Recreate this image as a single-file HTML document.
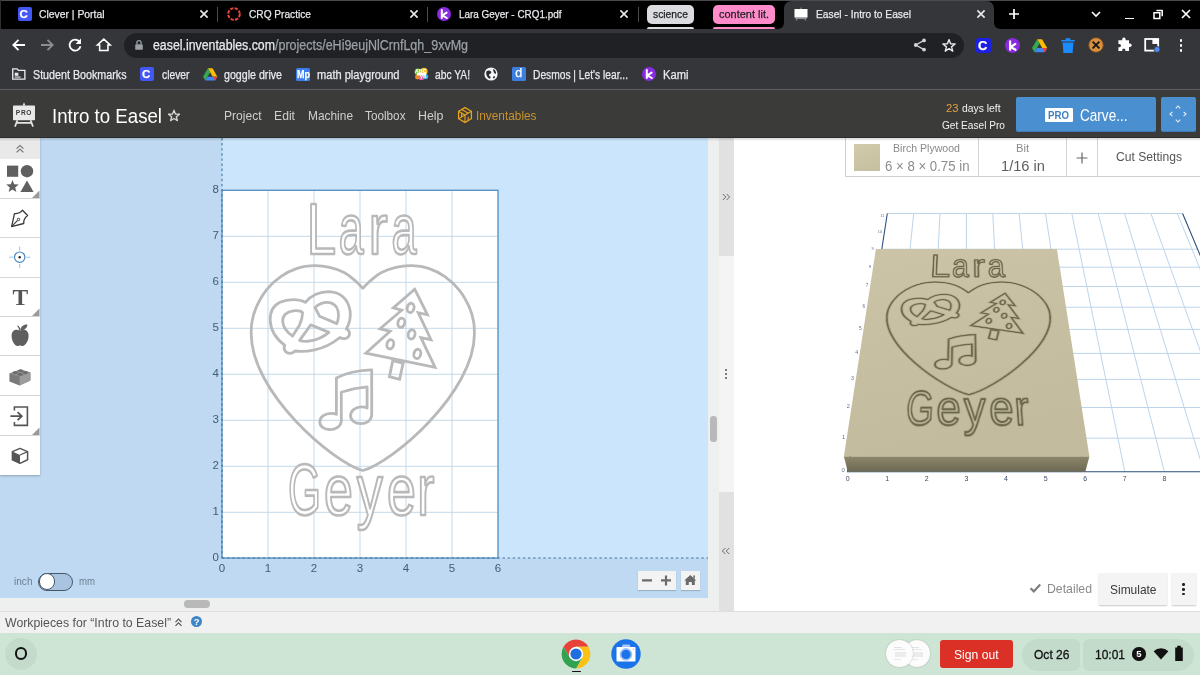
<!DOCTYPE html>
<html><head><meta charset="utf-8"><title>Easel - Intro to Easel</title>
<style>
*{box-sizing:border-box;margin:0;padding:0}
html,body{width:1200px;height:675px;overflow:hidden;background:#fff;font-family:"Liberation Sans",sans-serif;}
body{position:relative}
#root{position:absolute;left:0;top:0;width:1200px;height:675px;will-change:transform}
.abs{position:absolute}
.t{position:absolute;white-space:nowrap;display:block}
svg{position:absolute;overflow:visible}
</style></head><body>
<div id="root">
<div class="abs" style="left:0px;top:0px;width:1200px;height:29px;background:#000;"></div>
<div class="abs" style="left:0px;top:29px;width:1200px;height:62px;background:#35363a;"></div>
<div class="abs" style="left:0px;top:0px;width:1200px;height:1px;background:#4b4b4b;"></div>
<div class="abs" style="left:0px;top:0px;width:1px;height:29px;background:#2e2e2e;"></div>
<svg style="left:776px;top:0" width="228" height="29" viewBox="0 0 228 29"><path d="M0,29 C6,29 8,27 8,21 L8,9 C8,4 11,1 16,1 L210,1 C215,1 218,4 218,9 L218,21 C218,27 220,29 226,29 Z" fill="#35363a"/></svg>
<div class="abs" style="left:17.5px;top:7px;width:14px;height:14px;background:#4257f5;border-radius:2px"></div>
<span class="t" style="left:19.60px;top:6.50px;height:15px;line-height:15px;font-size:11.5px;color:#fff;font-weight:700;-webkit-text-stroke:0.25px;">C</span>
<span class="t" style="left:38.50px;top:6.00px;height:15px;line-height:15px;font-size:11.6px;color:#e8eaed;transform:scaleX(0.8938);transform-origin:0 50%;-webkit-text-stroke:0.25px;">Clever | Portal</span>
<svg style="left:197.5px;top:8.3px" width="12" height="12" viewBox="-6 -6 12 12"><path d="M-3.6,-3.6L3.6,3.6M3.6,-3.6L-3.6,3.6" stroke="#e8eaed" stroke-width="1.6" fill="none"/></svg>
<svg style="left:407.5px;top:8.3px" width="12" height="12" viewBox="-6 -6 12 12"><path d="M-3.6,-3.6L3.6,3.6M3.6,-3.6L-3.6,3.6" stroke="#e8eaed" stroke-width="1.6" fill="none"/></svg>
<svg style="left:617.5px;top:8.3px" width="12" height="12" viewBox="-6 -6 12 12"><path d="M-3.6,-3.6L3.6,3.6M3.6,-3.6L-3.6,3.6" stroke="#e8eaed" stroke-width="1.6" fill="none"/></svg>
<svg style="left:974.5px;top:8.3px" width="12" height="12" viewBox="-6 -6 12 12"><path d="M-3.6,-3.6L3.6,3.6M3.6,-3.6L-3.6,3.6" stroke="#e8eaed" stroke-width="1.6" fill="none"/></svg>
<div class="abs" style="left:217.0px;top:7px;width:1px;height:15px;background:#4a4b4e;"></div>
<div class="abs" style="left:426.5px;top:7px;width:1px;height:15px;background:#4a4b4e;"></div>
<div class="abs" style="left:637.5px;top:7px;width:1px;height:15px;background:#4a4b4e;"></div>
<svg style="left:226px;top:6px" width="16" height="16" viewBox="-8 -8 16 16"><circle r="5.8" fill="none" stroke="#e8453c" stroke-width="2" stroke-dasharray="3.3 1.25"/></svg>
<span class="t" style="left:248.50px;top:6.00px;height:15px;line-height:15px;font-size:11.6px;color:#e8eaed;transform:scaleX(0.8744);transform-origin:0 50%;-webkit-text-stroke:0.25px;">CRQ Practice</span>
<svg style="left:437px;top:7px" width="14" height="14" viewBox="-7 -7 14 14"><circle r="7" fill="#8a2be2"/><path d="M-2.2,-4 L-2.2,4 M2.6,-1.4 L-1.6,1.4 L2.8,4" stroke="#fff" stroke-width="2" fill="none" stroke-linecap="round" stroke-linejoin="round"/></svg>
<span class="t" style="left:458.50px;top:6.00px;height:15px;line-height:15px;font-size:11.6px;color:#e8eaed;transform:scaleX(0.8548);transform-origin:0 50%;-webkit-text-stroke:0.25px;">Lara Geyer - CRQ1.pdf</span>
<div class="abs" style="left:647px;top:4.5px;width:47px;height:19.5px;background:#dadce0;border-radius:5px"></div>
<span class="t" style="left:653.00px;top:6.00px;height:15px;line-height:15px;font-size:11.6px;color:#202124;transform:scaleX(0.8899);transform-origin:0 50%;-webkit-text-stroke:0.25px;">science</span>
<div class="abs" style="left:647px;top:27px;width:47px;height:2px;background:#dadce0;border-radius:2px 2px 0 0"></div>
<div class="abs" style="left:712.5px;top:4.5px;width:62.5px;height:19.5px;background:#ff8bcb;border-radius:5px"></div>
<span class="t" style="left:718.50px;top:6.00px;height:15px;line-height:15px;font-size:11.6px;color:#202124;transform:scaleX(0.9456);transform-origin:0 50%;-webkit-text-stroke:0.25px;">content lit.</span>
<div class="abs" style="left:712.5px;top:27px;width:62.5px;height:2px;background:#ff8bcb;border-radius:2px 2px 0 0"></div>
<svg style="left:793px;top:6px" width="16" height="16" viewBox="0 0 16 16"><rect x="1.5" y="3" width="13" height="8.6" fill="#fff"/><path d="M8,1.5V3M4.5,11.6L3.2,14.6M11.5,11.6L12.8,14.6M2.5,12.6H13.5" stroke="#9a9a9a" stroke-width="1" fill="none"/></svg>
<span class="t" style="left:815.50px;top:6.00px;height:15px;line-height:15px;font-size:11.6px;color:#e8eaed;transform:scaleX(0.8823);transform-origin:0 50%;-webkit-text-stroke:0.25px;">Easel - Intro to Easel</span>
<svg style="left:1006px;top:6px" width="16" height="16" viewBox="-8 -8 16 16"><path d="M-5,0H5M0,-5V5" stroke="#fff" stroke-width="1.7" fill="none"/></svg>
<svg style="left:1088px;top:6px" width="16" height="16" viewBox="-8 -8 16 16"><path d="M-4,-2L0,2L4,-2" stroke="#fff" stroke-width="1.6" fill="none"/></svg>
<div class="abs" style="left:1124.5px;top:17.5px;width:9.5px;height:1.8px;background:#fff;"></div>
<svg style="left:1150px;top:6px" width="16" height="16" viewBox="-8 -8 16 16"><path d="M-4,-1.2H1.8V4.6H-4Z" stroke="#fff" stroke-width="1.5" fill="none"/><path d="M-1.6,-3.6H4.2V2.2" stroke="#fff" stroke-width="1.5" fill="none"/></svg>
<svg style="left:1180px;top:8.3px" width="12" height="12" viewBox="-6 -6 12 12"><path d="M-4,-4L4,4M4,-4L-4,4" stroke="#fff" stroke-width="1.7" fill="none"/></svg>
<svg style="left:11px;top:37px" width="16" height="16" viewBox="-8 -8 16 16"><path d="M6,0H-5.5M-0.5,-5.2L-5.7,0L-0.5,5.2" stroke="#fff" stroke-width="1.8" fill="none"/></svg>
<svg style="left:39px;top:37px" width="16" height="16" viewBox="-8 -8 16 16"><path d="M-6,0H5.5M0.5,-5.2L5.7,0L0.5,5.2" stroke="#8a8d91" stroke-width="1.8" fill="none"/></svg>
<svg style="left:67px;top:37px" width="16" height="16" viewBox="-8 -8 16 16"><path d="M4.2,-3.6A5.5,5.5 0 1 0 5.5,1.2" stroke="#fff" stroke-width="1.8" fill="none"/><path d="M6,-6.4V-1H0.6Z" fill="#fff"/></svg>
<svg style="left:96px;top:37.2px" width="15.6" height="15.6" viewBox="-9 -9 18 18"><path d="M-7.4,0.2L0,-6.6L7.4,0.2H4.8V6.6H-4.8V0.2Z" stroke="#fff" stroke-width="1.8" fill="none" stroke-linejoin="miter"/></svg>
<div class="abs" style="left:124px;top:33px;width:840px;height:25px;background:#202124;border-radius:12.5px"></div>
<svg style="left:132.6px;top:38.6px" width="12" height="12" viewBox="0 0 14 14"><rect x="2.6" y="6" width="8.8" height="6.6" rx="1" fill="#9aa0a6"/><path d="M4.6,6V4.2A2.4,2.4 0 0 1 9.4,4.2V6" stroke="#9aa0a6" stroke-width="1.5" fill="none"/></svg>
<span class="t" style="left:152.50px;top:36.00px;height:18px;line-height:18px;font-size:14px;color:#e8eaed;transform:scaleX(0.8807);transform-origin:0 50%;-webkit-text-stroke:0.25px;">easel.inventables.com</span>
<span class="t" style="left:274.50px;top:36.00px;height:18px;line-height:18px;font-size:14px;color:#9aa0a6;transform:scaleX(0.8922);transform-origin:0 50%;-webkit-text-stroke:0.25px;">/projects/eHi9eujNlCrnfLqh_9xvMg</span>
<svg style="left:912px;top:37px" width="16" height="16" viewBox="-8 -8 16 16"><circle cx="4" cy="-4.6" r="1.9" fill="#d0d3d7"/><circle cx="-4.2" cy="0" r="1.9" fill="#d0d3d7"/><circle cx="4" cy="4.6" r="1.9" fill="#d0d3d7"/><path d="M4,-4.6L-4.2,0L4,4.6" stroke="#d0d3d7" stroke-width="1.3" fill="none"/></svg>
<svg style="left:938.5px;top:35.5px" width="20" height="20" viewBox="-10 -10 20 20"><path d="M0.00,-6.40 L1.58,-2.17 L6.09,-1.98 L2.56,0.83 L3.76,5.18 L0.00,2.69 L-3.76,5.18 L-2.56,0.83 L-6.09,-1.98 L-1.58,-2.17Z" stroke="#e8eaed" stroke-width="1.4" fill="none" stroke-linejoin="round"/></svg>
<div class="abs" style="left:976px;top:38px;width:15px;height:15px;background:#1c20e0;border-radius:2.5px"></div>
<span class="t" style="left:978.00px;top:37.10px;height:17px;line-height:17px;font-size:13px;color:#fff;font-weight:700;-webkit-text-stroke:0.25px;">C</span>
<svg style="left:1005.0px;top:38.0px" width="15.0" height="15.0" viewBox="-7 -7 14 14"><circle r="7" fill="#8a2be2"/><path d="M-2.2,-4 L-2.2,4 M2.6,-1.4 L-1.6,1.4 L2.8,4" stroke="#fff" stroke-width="2" fill="none" stroke-linecap="round" stroke-linejoin="round"/></svg>
<svg style="left:1032.4px;top:38.85px" width="15.2" height="13.299999999999999" viewBox="0 0 16 14"><path d="M5.4,0.3H10.6L16,9.6H10.8Z" fill="#fbbc04"/><path d="M5.4,0.3L0,9.6L2.6,14L8,4.8Z" fill="#34a853"/><path d="M2.6,14H13.4L16,9.6H5.2Z" fill="#4285f4"/><path d="M10.8,9.6H16L13.4,14L10.8,9.6Z" fill="#ea4335"/></svg>
<svg style="left:1060px;top:37px" width="16" height="17" viewBox="0 0 16 17"><path d="M1.2,3H14.8V4.6H1.2Z M5.6,1.2H10.4V3H5.6Z M2.6,5.6H13.4L12.6,16H3.4Z" fill="#1a8cff"/></svg>
<svg style="left:1088px;top:37px" width="16" height="16" viewBox="-8 -8 16 16"><circle r="7.2" fill="#d9903d"/><circle r="7.2" fill="none" stroke="#8a5520" stroke-width="0.8"/><path d="M-3.4,-3.4L3.4,3.4M3.4,-3.4L-3.4,3.4" stroke="#1a1a1a" stroke-width="2"/></svg>
<svg style="left:1116px;top:37px" width="16" height="16" viewBox="0 0 16 16"><path d="M6.2,2.2A1.7,1.7 0 0 1 9.6,2.2V3.2H13V6.6H14A1.7,1.7 0 0 1 14,10H13V14H9.4V13A1.6,1.6 0 0 0 6.2,13V14H2.4V10.2H3.4A1.6,1.6 0 0 0 3.4,7H2.4V3.2H6.2Z" fill="#fff"/></svg>
<svg style="left:1144px;top:37px" width="17" height="16" viewBox="0 0 17 16"><rect x="1.2" y="2" width="13" height="11.6" fill="none" stroke="#fff" stroke-width="1.8"/><rect x="8.4" y="2" width="5.8" height="5" fill="#fff"/><circle cx="13" cy="12.4" r="3" fill="#4d8bf5" stroke="#35363a" stroke-width="0.8"/></svg>
<div class="abs" style="left:1179.7px;top:39.2px;width:2.6px;height:2.6px;background:#fff;border-radius:50%"></div>
<div class="abs" style="left:1179.7px;top:44.2px;width:2.6px;height:2.6px;background:#fff;border-radius:50%"></div>
<div class="abs" style="left:1179.7px;top:49.2px;width:2.6px;height:2.6px;background:#fff;border-radius:50%"></div>
<svg style="left:12.4px;top:68.4px" width="13.6" height="11.8" viewBox="0 0 15 13"><path d="M0.8,1H5.6L7,2.6H14.2V12.2H0.8Z" fill="none" stroke="#e8eaed" stroke-width="1.5"/><rect x="3" y="5.2" width="4" height="3.4" fill="#e8eaed"/><rect x="3" y="9.4" width="6.5" height="1.2" fill="#e8eaed"/></svg>
<span class="t" style="left:33.00px;top:66.50px;height:16px;line-height:16px;font-size:12px;color:#e8eaed;transform:scaleX(0.8929);transform-origin:0 50%;-webkit-text-stroke:0.25px;">Student Bookmarks</span>
<div class="abs" style="left:140px;top:67px;width:14px;height:14px;background:#4257f5;border-radius:2px"></div>
<span class="t" style="left:142.10px;top:67.00px;height:15px;line-height:15px;font-size:11.5px;color:#fff;font-weight:700;-webkit-text-stroke:0.25px;">C</span>
<span class="t" style="left:161.50px;top:66.50px;height:16px;line-height:16px;font-size:12px;color:#e8eaed;transform:scaleX(0.8591);transform-origin:0 50%;-webkit-text-stroke:0.25px;">clever</span>
<svg style="left:202.8px;top:67.7px" width="14.4" height="12.6" viewBox="0 0 16 14"><path d="M5.4,0.3H10.6L16,9.6H10.8Z" fill="#fbbc04"/><path d="M5.4,0.3L0,9.6L2.6,14L8,4.8Z" fill="#34a853"/><path d="M2.6,14H13.4L16,9.6H5.2Z" fill="#4285f4"/><path d="M10.8,9.6H16L13.4,14L10.8,9.6Z" fill="#ea4335"/></svg>
<span class="t" style="left:224.00px;top:66.50px;height:16px;line-height:16px;font-size:12px;color:#e8eaed;transform:scaleX(0.8871);transform-origin:0 50%;-webkit-text-stroke:0.25px;">goggle drive</span>
<div class="abs" style="left:296px;top:67.5px;width:14px;height:13px;background:#3b7de9;border-radius:1.5px"></div>
<span class="t" style="left:296.60px;top:67.50px;height:13px;line-height:13px;font-size:10px;color:#fff;transform:scaleX(0.9004);transform-origin:0 50%;font-weight:700;-webkit-text-stroke:0.25px;">Mp</span>
<span class="t" style="left:317.00px;top:66.50px;height:16px;line-height:16px;font-size:12px;color:#e8eaed;transform:scaleX(0.9229);transform-origin:0 50%;-webkit-text-stroke:0.25px;">math playground</span>
<svg style="left:414px;top:67px" width="15" height="14" viewBox="0 0 15 14"><circle cx="4" cy="5" r="3.4" fill="#7ac943"/><circle cx="10" cy="4.4" r="3.6" fill="#f7c531"/><circle cx="7.4" cy="9.4" r="3.6" fill="#e05a9c"/><circle cx="11.6" cy="9.6" r="2.6" fill="#49b6e8"/><circle cx="3.4" cy="10" r="2.4" fill="#f08a2c"/><path d="M3,7.2H12" stroke="#fff" stroke-width="2.4"/></svg>
<span class="t" style="left:415.20px;top:69.40px;height:6px;line-height:6px;font-size:4.6px;color:#fff;transform:scaleX(1.1539);transform-origin:0 50%;font-weight:700;">ABC</span>
<span class="t" style="left:419.50px;top:74.20px;height:6px;line-height:6px;font-size:4.6px;color:#fff;transform:scaleX(1.1726);transform-origin:0 50%;font-weight:700;">ya</span>
<span class="t" style="left:435.00px;top:66.50px;height:16px;line-height:16px;font-size:12px;color:#e8eaed;transform:scaleX(0.8554);transform-origin:0 50%;-webkit-text-stroke:0.25px;">abc YA!</span>
<svg style="left:483.5px;top:67px" width="14" height="14" viewBox="-7 -7 14 14"><circle r="6.6" fill="#f5f6f7"/><path d="M-4.6,-2.4C-3,-4 -1.2,-3.4 0,-2.4C1,-1.6 0,-0.4 -1.2,0C-2.6,0.4 -2,2 -0.8,2.6C0,3 -0.4,4.6 -1.4,4.8C-3.8,3.8 -5.4,0.4 -4.6,-2.4Z M2.2,-5C4.2,-4.2 5.2,-2.4 5,-0.2C4,0 3,-0.8 2.7,-2C2.5,-3 1.8,-4 2.2,-5Z M2.6,2.2C3.6,2 4.4,2.6 4.1,3.3C3.5,4.1 2.9,4.5 2.3,4.5C1.9,3.8 1.9,2.7 2.6,2.2Z" fill="#2a2b2e"/></svg>
<div class="abs" style="left:512px;top:67px;width:14px;height:14px;background:#3d7fe0;border-radius:1.5px"></div>
<span class="t" style="left:515.20px;top:65.40px;height:16px;line-height:16px;font-size:12.5px;color:#fff;-webkit-text-stroke:0.25px;">d</span>
<span class="t" style="left:533.00px;top:66.50px;height:16px;line-height:16px;font-size:12px;color:#e8eaed;transform:scaleX(0.8524);transform-origin:0 50%;-webkit-text-stroke:0.25px;">Desmos | Let's lear...</span>
<svg style="left:642px;top:67px" width="14" height="14" viewBox="-7 -7 14 14"><circle r="7" fill="#8a2be2"/><path d="M-2.2,-4 L-2.2,4 M2.6,-1.4 L-1.6,1.4 L2.8,4" stroke="#fff" stroke-width="2" fill="none" stroke-linecap="round" stroke-linejoin="round"/></svg>
<span class="t" style="left:663.00px;top:66.50px;height:16px;line-height:16px;font-size:12px;color:#e8eaed;transform:scaleX(0.9327);transform-origin:0 50%;-webkit-text-stroke:0.25px;">Kami</span>
<div class="abs" style="left:0px;top:89px;width:1200px;height:1px;background:#5d5e61;"></div>
<div class="abs" style="left:0px;top:90px;width:1200px;height:48px;background:#3b3c39;"></div>
<div class="abs" style="left:0px;top:136.5px;width:1200px;height:1.5px;background:#2c2d2b;"></div>
<svg style="left:11px;top:100px" width="26" height="28" viewBox="0 0 26 28"><path d="M13,2.2L11.6,5.6H14.4Z" fill="#e6e6e6"/><rect x="2" y="5.6" width="22" height="14.6" rx="0.8" fill="#e9e9e9"/><path d="M6.4,20.2L4,26.6M19.6,20.2L22,26.6M4.6,22.8H21.4" stroke="#e6e6e6" stroke-width="1.7" fill="none"/><text x="13" y="15.4" text-anchor="middle" font-family="Liberation Sans,sans-serif" font-weight="700" font-size="6.6" letter-spacing="0.7" fill="#3b3c39">PRO</text></svg>
<span class="t" style="left:51.50px;top:102.20px;height:27px;line-height:27px;font-size:20.5px;color:#ffffff;transform:scaleX(0.9107);transform-origin:0 50%;">Intro to Easel</span>
<svg style="left:163.5px;top:105.5px" width="20" height="20" viewBox="-10 -10 20 20"><path d="M0.00,-5.80 L1.43,-1.97 L5.52,-1.79 L2.32,0.75 L3.41,4.69 L0.00,2.44 L-3.41,4.69 L-2.32,0.75 L-5.52,-1.79 L-1.43,-1.97Z" stroke="#d8d8d8" stroke-width="1.3" fill="none" stroke-linejoin="round"/></svg>
<span class="t" style="left:224.00px;top:107.00px;height:18px;line-height:18px;font-size:13.5px;color:#cfcfcf;transform:scaleX(0.8925);transform-origin:0 50%;">Project</span>
<span class="t" style="left:274.00px;top:107.00px;height:18px;line-height:18px;font-size:13.5px;color:#cfcfcf;transform:scaleX(0.9027);transform-origin:0 50%;">Edit</span>
<span class="t" style="left:307.50px;top:107.00px;height:18px;line-height:18px;font-size:13.5px;color:#cfcfcf;transform:scaleX(0.8819);transform-origin:0 50%;">Machine</span>
<span class="t" style="left:365.00px;top:107.00px;height:18px;line-height:18px;font-size:13.5px;color:#cfcfcf;transform:scaleX(0.8704);transform-origin:0 50%;">Toolbox</span>
<span class="t" style="left:418.00px;top:107.00px;height:18px;line-height:18px;font-size:13.5px;color:#cfcfcf;transform:scaleX(0.9184);transform-origin:0 50%;">Help</span>
<svg style="left:456.5px;top:107px" width="16" height="16" viewBox="-8 -8 16 16"><polygon points="0.00,-7.40 6.41,-3.70 6.41,3.70 0.00,7.40 -6.41,3.70 -6.41,-3.70" fill="none" stroke="#e9a21f" stroke-width="1.3"/><path d="M-6.4,-3.7L0,0L6.4,-3.7M0,0V7.4M-3.2,-5.5L3.2,-1.8M-3.4,1.9V-1.9M3.2,5.5V1.8M-6.4,3.7L0,0" stroke="#e9a21f" stroke-width="1.1" fill="none"/></svg>
<span class="t" style="left:476.00px;top:107.00px;height:18px;line-height:18px;font-size:13.5px;color:#c9922e;transform:scaleX(0.8762);transform-origin:0 50%;">Inventables</span>
<span class="t" style="left:946.00px;top:101.10px;height:15px;line-height:15px;font-size:11.5px;color:#e8a23a;transform:scaleX(0.9772);transform-origin:0 50%;">23</span>
<span class="t" style="left:961.50px;top:101.10px;height:15px;line-height:15px;font-size:11.5px;color:#f2f2f2;transform:scaleX(0.8990);transform-origin:0 50%;">days left</span>
<span class="t" style="left:941.50px;top:117.80px;height:15px;line-height:15px;font-size:11.5px;color:#f2f2f2;transform:scaleX(0.8800);transform-origin:0 50%;">Get Easel Pro</span>
<div class="abs" style="left:1015.5px;top:97px;width:140.5px;height:35px;background:#4a8fd0;border-radius:2px;border-bottom:1px solid #3d7ab6"></div>
<div class="abs" style="left:1044.5px;top:108px;width:28.5px;height:13.5px;background:#fff;border-radius:1px"></div>
<span class="t" style="left:1048.30px;top:107.90px;height:14px;line-height:14px;font-size:10.5px;color:#3f7fbf;transform:scaleX(0.9229);transform-origin:0 50%;font-weight:700;">PRO</span>
<span class="t" style="left:1080.00px;top:105.10px;height:21px;line-height:21px;font-size:16px;color:#fff;transform:scaleX(0.8480);transform-origin:0 50%;">Carve...</span>
<div class="abs" style="left:1160.5px;top:97px;width:35.5px;height:35px;background:#4a8fd0;border-radius:2px;border-bottom:1px solid #3d7ab6"></div>
<svg style="left:1167px;top:103px" width="22" height="22" viewBox="-11 -11 22 22"><path d="M-2.2,-5.6L0,-8L2.2,-5.6M-2.2,5.6L0,8L2.2,5.6M-5.6,-2.2L-8,0L-5.6,2.2M5.6,-2.2L8,0L5.6,2.2" stroke="#e8f0fa" stroke-width="1.1" fill="none"/></svg>
<div class="abs" style="left:0px;top:138px;width:708px;height:460px;background:#bed9f1;"></div>
<div class="abs" style="left:222px;top:138px;width:486px;height:420px;background:#cae5fc;"></div>
<div class="abs" style="left:0px;top:138px;width:1200px;height:3px;background:transparent;background:linear-gradient(rgba(0,0,0,.16),rgba(0,0,0,0));z-index:5"></div>
<svg style="left:0;top:0" width="1200" height="675" viewBox="0 0 1200 675">
<rect x="222.0" y="190.3" width="276.0" height="367.7" fill="#fff"/>
<path d="M268.0,190.3V558.0" stroke="#c4d9eb" stroke-width="1"/>
<path d="M314.0,190.3V558.0" stroke="#c4d9eb" stroke-width="1"/>
<path d="M360.0,190.3V558.0" stroke="#c4d9eb" stroke-width="1"/>
<path d="M406.0,190.3V558.0" stroke="#c4d9eb" stroke-width="1"/>
<path d="M452.0,190.3V558.0" stroke="#c4d9eb" stroke-width="1"/>
<path d="M222.0,512.3H498.0" stroke="#c4d9eb" stroke-width="1"/>
<path d="M222.0,466.3H498.0" stroke="#c4d9eb" stroke-width="1"/>
<path d="M222.0,420.3H498.0" stroke="#c4d9eb" stroke-width="1"/>
<path d="M222.0,374.3H498.0" stroke="#c4d9eb" stroke-width="1"/>
<path d="M222.0,328.3H498.0" stroke="#c4d9eb" stroke-width="1"/>
<path d="M222.0,282.3H498.0" stroke="#c4d9eb" stroke-width="1"/>
<path d="M222.0,236.3H498.0" stroke="#c4d9eb" stroke-width="1"/>
<path d="M362.8,288.2 C364.2,286.8 368.3,282.5 371.4,279.9 C374.5,277.3 377.4,274.7 381.5,272.6 C385.6,270.5 390.8,268.5 395.9,267.4 C401.0,266.2 406.8,265.5 412.2,265.7 C417.7,265.9 423.1,266.6 428.6,268.4 C434.0,270.2 439.8,273.1 444.9,276.7 C450.1,280.3 455.2,285.0 459.3,290.2 C463.4,295.4 467.1,302.4 469.5,307.7 C471.9,313.0 472.9,317.9 473.7,322.3 C474.5,326.6 474.3,330.0 474.4,334.0 C474.4,392.3 393.1,462.0 362.8,470.5 C332.5,462.0 251.2,392.3 251.2,334.0 C251.3,330.0 251.1,326.6 251.9,322.3 C252.7,317.9 253.7,313.0 256.1,307.7 C258.5,302.4 262.2,295.4 266.3,290.2 C270.4,285.0 275.5,280.3 280.7,276.7 C285.8,273.1 291.6,270.2 297.0,268.4 C302.5,266.6 307.9,265.9 313.4,265.7 C318.8,265.5 324.6,266.2 329.7,267.4 C334.8,268.5 340.0,270.5 344.1,272.6 C348.2,274.7 351.1,277.3 354.2,279.9 C357.3,282.5 361.4,286.8 362.8,288.2 Z" fill="none" stroke="#b9b9b9" stroke-width="2.8" stroke-linejoin="round"/>
<path d="M270.2,320.4 C269.9,311.6 273.8,305.3 280.0,302.3 C288.0,298.8 298.7,298.8 305.4,302.3 C311.1,295.6 320.0,291.6 328.9,291.6 C339.6,292.0 348.4,298.2 350.2,311.6 C350.9,318.7 349.3,324.0 346.3,329.0 C350.6,330.8 350.6,336.4 346.3,338.2 C344.0,339.1 341.7,338.6 339.9,337.5 C332.4,343.6 323.6,348.0 314.7,349.8 C307.6,351.4 300.4,351.7 294.8,351.0 C292.6,354.2 287.3,354.2 285.2,351.0 C283.7,348.9 283.7,347.1 284.8,345.3 C276.4,339.1 270.6,330.2 270.2,320.4 Z" fill="none" stroke="#b9b9b9" stroke-width="2.8" stroke-linejoin="round"/>
<path d="M282.7,321.3 C282.3,316.0 286.6,311.6 293.3,310.8 C297.8,310.3 301.3,311.2 302.6,312.6 C302.6,316.9 301.3,321.3 299.6,324.9 L292.6,336.1 C286.6,332.0 283.0,327.2 282.7,321.3 Z" fill="none" stroke="#b9b9b9" stroke-width="2.8" stroke-linejoin="round"/>
<path d="M315.0,307.6 C318.2,303.6 324.4,301.8 329.8,302.7 C336.0,304.1 338.8,309.8 338.5,316.0 C338.3,319.0 337.8,321.3 336.9,323.6 L319.5,316.2 C317.9,313.3 317.3,311.6 315.0,307.6 Z" fill="none" stroke="#b9b9b9" stroke-width="2.8" stroke-linejoin="round"/>
<path d="M310.8,324.9 L328.9,332.4 C323.6,336.8 316.4,340.0 310.2,340.9 C305.8,341.8 302.2,341.4 299.6,340.4 Z" fill="none" stroke="#b9b9b9" stroke-width="2.8" stroke-linejoin="round"/>
<path d="M414.7,289.2 L427.5,314.8 L418.2,312.7 L431.0,339.7 L420.9,337.6 L435.1,367.4 L365.8,353.2 L390.1,331.3 L380.0,328.7 L401.7,310.2 L393.3,307.9Z" fill="none" stroke="#b9b9b9" stroke-width="2.8" stroke-linejoin="miter"/>
<path d="M392.8,360.7 L403.1,363.2 L399.6,379.3 L389.4,376.7Z" fill="none" stroke="#b9b9b9" stroke-width="2.8"/>
<ellipse cx="410.6" cy="307.9" rx="3.4" ry="4.7" transform="rotate(14 410.6 307.9)" fill="none" stroke="#b9b9b9" stroke-width="2.8"/>
<ellipse cx="401.3" cy="322.8" rx="3.4" ry="4.7" transform="rotate(14 401.3 322.8)" fill="none" stroke="#b9b9b9" stroke-width="2.8"/>
<ellipse cx="411.6" cy="334.4" rx="3.4" ry="4.7" transform="rotate(14 411.6 334.4)" fill="none" stroke="#b9b9b9" stroke-width="2.8"/>
<ellipse cx="390.3" cy="344.3" rx="3.4" ry="4.7" transform="rotate(14 390.3 344.3)" fill="none" stroke="#b9b9b9" stroke-width="2.8"/>
<ellipse cx="417.3" cy="353.9" rx="3.4" ry="4.7" transform="rotate(14 417.3 353.9)" fill="none" stroke="#b9b9b9" stroke-width="2.8"/>
<path d="M336.4,377.9 C345.8,373.1 358.2,370.4 371.7,369.9 L371.7,415.4 C371.0,420.8 366.2,423.6 360.9,423.6 C354.7,423.6 350.6,420.2 350.6,415.8 C350.6,410.4 355.6,406.9 361.8,406.9 C363.9,406.9 365.7,407.2 367.1,408.0 L367.1,386.8 C358.2,387.7 349.3,389.5 341.3,392.3 L341.3,421.5 C340.4,426.8 335.5,429.6 329.8,429.6 C323.9,429.6 319.8,426.4 319.8,422.0 C319.8,416.7 325.2,413.3 331.2,413.3 C333.3,413.3 335.1,413.6 336.4,414.4 Z" fill="none" stroke="#b9b9b9" stroke-width="2.8" stroke-linejoin="round"/>
<text y="254.3" font-family="Liberation Sans,sans-serif" font-size="72" fill="#fff" stroke="#b9b9b9" stroke-width="2.6" stroke-linejoin="round"><tspan x="306.72" textLength="29.33" lengthAdjust="spacingAndGlyphs">L</tspan><tspan x="338.8" textLength="24.9" lengthAdjust="spacingAndGlyphs">a</tspan><tspan x="368.48" textLength="19.18" lengthAdjust="spacingAndGlyphs">r</tspan><tspan x="391.39" textLength="25.06" lengthAdjust="spacingAndGlyphs">a</tspan></text>
<text y="515" font-family="Liberation Sans,sans-serif" font-size="72" fill="#fff" stroke="#b9b9b9" stroke-width="2.6" stroke-linejoin="round"><tspan x="287.92" textLength="32.94" lengthAdjust="spacingAndGlyphs">G</tspan><tspan x="324.09" textLength="28.92" lengthAdjust="spacingAndGlyphs">e</tspan><tspan x="356.67" textLength="26.13" lengthAdjust="spacingAndGlyphs">y</tspan><tspan x="387.09" textLength="28.92" lengthAdjust="spacingAndGlyphs">e</tspan><tspan x="417.37" textLength="17.18" lengthAdjust="spacingAndGlyphs">r</tspan></text>
<rect x="222.0" y="190.3" width="276.0" height="367.7" fill="none" stroke="#5b94c4" stroke-width="1.4"/>
<path d="M222.0,138V558.0" stroke="#3f74a3" stroke-width="1.1" stroke-dasharray="2.4 2.7" fill="none"/>
<path d="M222.0,558.0H708" stroke="#3f74a3" stroke-width="1.1" stroke-dasharray="2.4 2.7" fill="none"/>
</svg>
<span class="t" style="left:212.50px;top:549.90px;height:15px;line-height:15px;font-size:11.5px;color:#3f5d78;">0</span>
<span class="t" style="left:212.50px;top:503.90px;height:15px;line-height:15px;font-size:11.5px;color:#3f5d78;">1</span>
<span class="t" style="left:212.50px;top:457.90px;height:15px;line-height:15px;font-size:11.5px;color:#3f5d78;">2</span>
<span class="t" style="left:212.50px;top:411.90px;height:15px;line-height:15px;font-size:11.5px;color:#3f5d78;">3</span>
<span class="t" style="left:212.50px;top:365.90px;height:15px;line-height:15px;font-size:11.5px;color:#3f5d78;">4</span>
<span class="t" style="left:212.50px;top:319.90px;height:15px;line-height:15px;font-size:11.5px;color:#3f5d78;">5</span>
<span class="t" style="left:212.50px;top:273.90px;height:15px;line-height:15px;font-size:11.5px;color:#3f5d78;">6</span>
<span class="t" style="left:212.50px;top:227.90px;height:15px;line-height:15px;font-size:11.5px;color:#3f5d78;">7</span>
<span class="t" style="left:212.50px;top:181.90px;height:15px;line-height:15px;font-size:11.5px;color:#3f5d78;">8</span>
<span class="t" style="left:218.80px;top:561.00px;height:15px;line-height:15px;font-size:11.5px;color:#3f5d78;">0</span>
<span class="t" style="left:264.80px;top:561.00px;height:15px;line-height:15px;font-size:11.5px;color:#3f5d78;">1</span>
<span class="t" style="left:310.80px;top:561.00px;height:15px;line-height:15px;font-size:11.5px;color:#3f5d78;">2</span>
<span class="t" style="left:356.80px;top:561.00px;height:15px;line-height:15px;font-size:11.5px;color:#3f5d78;">3</span>
<span class="t" style="left:402.80px;top:561.00px;height:15px;line-height:15px;font-size:11.5px;color:#3f5d78;">4</span>
<span class="t" style="left:448.80px;top:561.00px;height:15px;line-height:15px;font-size:11.5px;color:#3f5d78;">5</span>
<span class="t" style="left:494.80px;top:561.00px;height:15px;line-height:15px;font-size:11.5px;color:#3f5d78;">6</span>
<div class="abs" style="left:0px;top:138px;width:39.5px;height:336.5px;background:#fff;box-shadow:0 1px 2px rgba(0,0,0,.25)"></div>
<div class="abs" style="left:0px;top:138px;width:39.5px;height:21px;background:#e9e9e9;"></div>
<svg style="left:13px;top:142px" width="14" height="14" viewBox="-7 -7 14 14"><path d="M-3.4,-0.4L0,-3.6L3.4,-0.4M-3.4,3.4L0,0.2L3.4,3.4" stroke="#6a6a6a" stroke-width="1.1" fill="none"/></svg>
<div class="abs" style="left:0px;top:198.0px;width:39.5px;height:1px;background:#d6d6d6;"></div>
<div class="abs" style="left:0px;top:236.8px;width:39.5px;height:1px;background:#d6d6d6;"></div>
<div class="abs" style="left:0px;top:276.5px;width:39.5px;height:1px;background:#d6d6d6;"></div>
<div class="abs" style="left:0px;top:315.8px;width:39.5px;height:1px;background:#d6d6d6;"></div>
<div class="abs" style="left:0px;top:355.3px;width:39.5px;height:1px;background:#d6d6d6;"></div>
<div class="abs" style="left:0px;top:395.1px;width:39.5px;height:1px;background:#d6d6d6;"></div>
<div class="abs" style="left:0px;top:435.1px;width:39.5px;height:1px;background:#d6d6d6;"></div>
<svg style="left:0;top:0" width="40" height="480" viewBox="0 0 40 480"><rect x="7" y="165.6" width="11.2" height="11.2" fill="#5f5f5f"/><circle cx="27" cy="171.2" r="6.2" fill="#5f5f5f"/><polygon points="12.50,180.00 14.15,184.33 18.78,184.56 15.16,187.47 16.38,191.94 12.50,189.40 8.62,191.94 9.84,187.47 6.22,184.56 10.85,184.33" fill="#5f5f5f"/><polygon points="27,180.4 33.6,192 20.4,192" fill="#5f5f5f"/><polygon points="39.5,190.5 39.5,198 32,198" fill="#9a9a9a"/><polygon points="39.5,308.5 39.5,316 32,316" fill="#9a9a9a"/><polygon points="39.5,427.5 39.5,435 32,435" fill="#9a9a9a"/><path d="M11.6,226.7 L14.5,213.7 Q19.5,214 22.5,210.2 L27.6,215.5 Q23.4,218.6 23.7,223.5 Z" fill="none" stroke="#3a3a3a" stroke-width="1.3" stroke-linejoin="round"/><path d="M11.6,226.7L17.6,220.4" stroke="#3a3a3a" stroke-width="1.1"/><circle cx="18.55" cy="219.45" r="1.2" fill="#fff" stroke="#3a3a3a" stroke-width="1"/><circle cx="19.7" cy="257.2" r="5.2" fill="none" stroke="#4a86c8" stroke-width="1.2"/><circle cx="19.7" cy="257.2" r="1.2" fill="#222"/><path d="M19.7,246.5V250.5M19.7,264V268M9,257.2H13M26.4,257.2H30.4" stroke="#9cc0e6" stroke-width="1"/><path d="M20,331 C17,328.6 11.6,329.6 11.6,335.8 C11.6,341 14.6,346 17.4,346 C18.6,346 19.2,345.4 20,345.4 C20.8,345.4 21.4,346 22.6,346 C25.4,346 28.6,341 28.6,335.8 C28.6,329.6 23,328.6 20,331Z" fill="#5f5f5f"/><path d="M20.4,330.4 C20.4,326.6 23.4,324.2 27.4,324.4 C27.2,328 24.4,330.4 20.4,330.4Z" fill="#5f5f5f"/><path d="M20,331C19.8,328.6 19,327 17.6,325.8" stroke="#5f5f5f" stroke-width="1.2" fill="none"/><path d="M9.4,373.4L20.4,369.6L30.4,372.4V380.4L19.6,385.4L9.4,381.4Z" fill="#7a7a7a"/><path d="M9.4,373.4L19.6,376.8L30.4,372.4L20.4,369.6Z" fill="#8e8e8e"/><path d="M19.6,376.8V385.4L30.4,380.4V372.4Z" fill="#9c9c9c"/><ellipse cx="15.4" cy="372.6" rx="2.6" ry="1.3" fill="#6a6a6a"/><ellipse cx="20.6" cy="370.8" rx="2.6" ry="1.3" fill="#6a6a6a"/><ellipse cx="20" cy="374.4" rx="2.6" ry="1.3" fill="#6a6a6a"/><ellipse cx="25.2" cy="372.6" rx="2.6" ry="1.3" fill="#6a6a6a"/><path d="M14.4,410.4V407H27.4V425.4H14.4V422" fill="none" stroke="#555" stroke-width="1.6"/><path d="M10.4,416.2H21M17.6,412.2L21.8,416.2L17.6,420.2" fill="none" stroke="#555" stroke-width="1.8"/><path d="M20,448.4L27.6,451.6V459.8L20,463.4L12.4,459.8V451.6Z" fill="#fff" stroke="#555" stroke-width="1.5" stroke-linejoin="round"/><path d="M12.4,451.6L20,455V463.4L12.4,459.8Z" fill="#555"/><path d="M20,455L27.6,451.6" stroke="#555" stroke-width="1.3"/></svg>
<span class="t" style="left:12.60px;top:281.70px;height:31px;line-height:31px;font-size:23.5px;color:#555;font-weight:700;font-family:'Liberation Serif',serif;">T</span>
<span class="t" style="left:13.50px;top:573.80px;height:14px;line-height:14px;font-size:11px;color:#6f8092;transform:scaleX(0.9168);transform-origin:0 50%;">inch</span>
<div class="abs" style="left:38px;top:573px;width:35px;height:17.5px;background:#a9c4e0;border-radius:9px;border:1.2px solid #46576a"></div>
<div class="abs" style="left:38.6px;top:573.4px;width:16.6px;height:16.6px;background:#fff;border-radius:50%;border:1.2px solid #46576a"></div>
<span class="t" style="left:79.00px;top:573.80px;height:14px;line-height:14px;font-size:11px;color:#6f8092;transform:scaleX(0.8731);transform-origin:0 50%;">mm</span>
<div class="abs" style="left:638px;top:571px;width:38.3px;height:19.4px;background:#f3f3f3;box-shadow:0 1px 1px rgba(0,0,0,.18)"></div>
<div class="abs" style="left:680.7px;top:571px;width:19.3px;height:19.4px;background:#f3f3f3;box-shadow:0 1px 1px rgba(0,0,0,.18)"></div>
<svg style="left:638px;top:571px" width="62" height="20" viewBox="638 571 62 20"><path d="M642,580.4H652M661,580.4H671M666,575.4V585.4" stroke="#6b6b6b" stroke-width="2.2"/><path d="M690.3,575L696.4,580.6H694.8V585H691.8V582H688.8V585H685.8V580.6H684.2Z" fill="#6b6b6b"/><rect x="693.4" y="575.4" width="1.5" height="3" fill="#6b6b6b"/></svg>
<div class="abs" style="left:708px;top:138px;width:11px;height:473px;background:#eeefef;"></div>
<div class="abs" style="left:710.2px;top:416px;width:6.6px;height:26px;background:#b9b9b9;border-radius:3.3px"></div>
<div class="abs" style="left:0px;top:597.7px;width:708px;height:13.3px;background:#eeefef;"></div>
<div class="abs" style="left:184px;top:600.3px;width:26px;height:7.4px;background:#b9b9b9;border-radius:3.7px"></div>
<div class="abs" style="left:719px;top:138px;width:14.5px;height:473px;background:#f4f4f4;"></div>
<div class="abs" style="left:719px;top:138px;width:14.5px;height:118px;background:#e1e1e1;"></div>
<div class="abs" style="left:719px;top:492px;width:14.5px;height:119px;background:#e1e1e1;"></div>
<svg style="left:719px;top:190px" width="14" height="14" viewBox="-7 -7 14 14"><path d="M-3.2,-3L-0.2,0L-3.2,3M0.6,-3L3.6,0L0.6,3" stroke="#6a6a6a" stroke-width="1" fill="none"/></svg>
<svg style="left:719px;top:544px" width="14" height="14" viewBox="-7 -7 14 14"><path d="M3.2,-3L0.2,0L3.2,3M-0.6,-3L-3.6,0L-0.6,3" stroke="#6a6a6a" stroke-width="1" fill="none"/></svg>
<div class="abs" style="left:725px;top:369px;width:2.2px;height:2.2px;background:#555;border-radius:50%"></div>
<div class="abs" style="left:725px;top:373px;width:2.2px;height:2.2px;background:#555;border-radius:50%"></div>
<div class="abs" style="left:725px;top:377px;width:2.2px;height:2.2px;background:#555;border-radius:50%"></div>
<div class="abs" style="left:0px;top:611px;width:1200px;height:22px;background:#f1f1f1;border-top:1px solid #dedede"></div>
<span class="t" style="left:4.50px;top:613.50px;height:17px;line-height:17px;font-size:13px;color:#555;transform:scaleX(0.9468);transform-origin:0 50%;">Workpieces for “Intro to Easel”</span>
<svg style="left:172px;top:615.5px" width="13" height="13" viewBox="-6.5 -6.5 13 13"><path d="M-3,-0.4L0,-3.4L3,-0.4M-3,3.4L0,0.4L3,3.4" stroke="#555" stroke-width="1.2" fill="none"/></svg>
<div class="abs" style="left:190.8px;top:616.4px;width:11px;height:11px;background:#3d85c6;border-radius:50%"></div>
<span class="t" style="left:193.80px;top:616.00px;height:12px;line-height:12px;font-size:9.5px;color:#fff;font-weight:700;">?</span>
<div class="abs" style="left:733.5px;top:138px;width:466.5px;height:473px;background:#fff;"></div>
<svg style="left:0;top:0" width="1200" height="675" viewBox="0 0 1200 675">
<defs><clipPath id="pc"><rect x="734" y="138" width="466" height="473"/></clipPath><linearGradient id="wtop" x1="0" y1="0" x2="0.25" y2="1"><stop offset="0" stop-color="#cbc4a7"/><stop offset="0.5" stop-color="#c6bfa1"/><stop offset="1" stop-color="#c2bb9d"/></linearGradient><linearGradient id="wfront" x1="0" y1="0" x2="0" y2="1"><stop offset="0" stop-color="#8d876b"/><stop offset="1" stop-color="#6c6853"/></linearGradient></defs>
<g clip-path="url(#pc)">
<path d="M887.2,471.7L913.7,213.5" stroke="#bdd4ea" stroke-width="1"/>
<path d="M926.8,471.7L940.0,213.5" stroke="#bdd4ea" stroke-width="1"/>
<path d="M966.4,471.7L966.4,213.5" stroke="#bdd4ea" stroke-width="1"/>
<path d="M1006.0,471.7L992.8,213.5" stroke="#bdd4ea" stroke-width="1"/>
<path d="M1045.6,471.7L1019.1,213.5" stroke="#bdd4ea" stroke-width="1"/>
<path d="M1085.2,471.7L1045.5,213.5" stroke="#bdd4ea" stroke-width="1"/>
<path d="M1124.8,471.7L1071.8,213.5" stroke="#bdd4ea" stroke-width="1"/>
<path d="M1164.4,471.7L1098.2,213.5" stroke="#bdd4ea" stroke-width="1"/>
<path d="M1204.0,471.7L1124.6,213.5" stroke="#bdd4ea" stroke-width="1"/>
<path d="M1243.6,471.7L1150.9,213.5" stroke="#bdd4ea" stroke-width="1"/>
<path d="M1283.2,471.7L1177.3,213.5" stroke="#bdd4ea" stroke-width="1"/>
<path d="M852.7,438.2L1277.2,438.2" stroke="#bdd4ea" stroke-width="1"/>
<path d="M857.4,407.5L1264.4,407.5" stroke="#bdd4ea" stroke-width="1"/>
<path d="M861.7,379.4L1252.6,379.4" stroke="#bdd4ea" stroke-width="1"/>
<path d="M865.7,353.4L1241.7,353.4" stroke="#bdd4ea" stroke-width="1"/>
<path d="M869.4,329.4L1231.6,329.4" stroke="#bdd4ea" stroke-width="1"/>
<path d="M872.8,307.2L1222.3,307.2" stroke="#bdd4ea" stroke-width="1"/>
<path d="M876.0,286.5L1213.5,286.5" stroke="#bdd4ea" stroke-width="1"/>
<path d="M879.0,267.2L1205.4,267.2" stroke="#bdd4ea" stroke-width="1"/>
<path d="M881.8,249.2L1197.8,249.2" stroke="#bdd4ea" stroke-width="1"/>
<path d="M887.3,213.5L1182.6,213.5" stroke="#bdd4ea" stroke-width="1"/>
<path d="M887.3,213.5L847.6,471.7L1291.1,471.7L1182.6,213.5" stroke="#2c4f7c" stroke-width="1.1" fill="none"/>
<polygon points="875.9,248.9 1056.9,248.9 1089.4,456.4 843.9,456.4" fill="url(#wtop)"/>
<polygon points="843.9,456.4 1089.4,456.4 1085.3,471.8 847.8,471.8" fill="url(#wfront)"/>
</g>
<text x="847.6" y="481" text-anchor="middle" font-family="Liberation Sans,sans-serif" font-size="7" fill="#3a4a66">0</text>
<text x="887.2" y="481" text-anchor="middle" font-family="Liberation Sans,sans-serif" font-size="7" fill="#3a4a66">1</text>
<text x="926.8" y="481" text-anchor="middle" font-family="Liberation Sans,sans-serif" font-size="7" fill="#3a4a66">2</text>
<text x="966.4" y="481" text-anchor="middle" font-family="Liberation Sans,sans-serif" font-size="7" fill="#3a4a66">3</text>
<text x="1006.0" y="481" text-anchor="middle" font-family="Liberation Sans,sans-serif" font-size="7" fill="#3a4a66">4</text>
<text x="1045.6" y="481" text-anchor="middle" font-family="Liberation Sans,sans-serif" font-size="7" fill="#3a4a66">5</text>
<text x="1085.2" y="481" text-anchor="middle" font-family="Liberation Sans,sans-serif" font-size="7" fill="#3a4a66">6</text>
<text x="1124.8" y="481" text-anchor="middle" font-family="Liberation Sans,sans-serif" font-size="7" fill="#3a4a66">7</text>
<text x="1164.4" y="481" text-anchor="middle" font-family="Liberation Sans,sans-serif" font-size="7" fill="#3a4a66">8</text>
<text x="843.1" y="472.2" text-anchor="middle" font-family="Liberation Sans,sans-serif" font-size="6.0" fill="#3a4a66" opacity="0.8">0</text>
<text x="843.5" y="438.7" text-anchor="middle" font-family="Liberation Sans,sans-serif" font-size="5.8" fill="#3a4a66" opacity="0.8">1</text>
<text x="848.2" y="408.0" text-anchor="middle" font-family="Liberation Sans,sans-serif" font-size="5.6" fill="#3a4a66" opacity="0.8">2</text>
<text x="852.6" y="379.9" text-anchor="middle" font-family="Liberation Sans,sans-serif" font-size="5.3" fill="#3a4a66" opacity="0.8">3</text>
<text x="856.6" y="353.9" text-anchor="middle" font-family="Liberation Sans,sans-serif" font-size="5.1" fill="#3a4a66" opacity="0.8">4</text>
<text x="860.3" y="329.9" text-anchor="middle" font-family="Liberation Sans,sans-serif" font-size="4.9" fill="#3a4a66" opacity="0.8">5</text>
<text x="863.7" y="307.7" text-anchor="middle" font-family="Liberation Sans,sans-serif" font-size="4.7" fill="#3a4a66" opacity="0.8">6</text>
<text x="866.9" y="287.0" text-anchor="middle" font-family="Liberation Sans,sans-serif" font-size="4.5" fill="#3a4a66" opacity="0.8">7</text>
<text x="869.9" y="267.7" text-anchor="middle" font-family="Liberation Sans,sans-serif" font-size="4.2" fill="#3a4a66" opacity="0.8">8</text>
<text x="872.7" y="249.7" text-anchor="middle" font-family="Liberation Sans,sans-serif" font-size="4.0" fill="#3a4a66" opacity="0.8">9</text>
<text x="879.9" y="232.8" text-anchor="middle" font-family="Liberation Sans,sans-serif" font-size="3.8" fill="#3a4a66" opacity="0.8">10</text>
<text x="882.3" y="217.0" text-anchor="middle" font-family="Liberation Sans,sans-serif" font-size="3.6" fill="#3a4a66" opacity="0.8">11</text>
</svg>
<div class="abs" style="left:0;top:0;width:276.0px;height:367.7px;transform-origin:0 0;transform:matrix3d(0.65579710,0.00000000,0,0.0000000000,-0.69001117,0.23821166,0,-0.0007145203,0,0,1,0,875.900000,248.900000,0,1);"><svg style="left:0;top:0" width="276.0" height="367.7" viewBox="222.0 190.3 276.0 367.7"><path d="M362.8,288.2 C364.2,286.8 368.3,282.5 371.4,279.9 C374.5,277.3 377.4,274.7 381.5,272.6 C385.6,270.5 390.8,268.5 395.9,267.4 C401.0,266.2 406.8,265.5 412.2,265.7 C417.7,265.9 423.1,266.6 428.6,268.4 C434.0,270.2 439.8,273.1 444.9,276.7 C450.1,280.3 455.2,285.0 459.3,290.2 C463.4,295.4 467.1,302.4 469.5,307.7 C471.9,313.0 472.9,317.9 473.7,322.3 C474.5,326.6 474.3,330.0 474.4,334.0 C474.4,392.3 393.1,462.0 362.8,470.5 C332.5,462.0 251.2,392.3 251.2,334.0 C251.3,330.0 251.1,326.6 251.9,322.3 C252.7,317.9 253.7,313.0 256.1,307.7 C258.5,302.4 262.2,295.4 266.3,290.2 C270.4,285.0 275.5,280.3 280.7,276.7 C285.8,273.1 291.6,270.2 297.0,268.4 C302.5,266.6 307.9,265.9 313.4,265.7 C318.8,265.5 324.6,266.2 329.7,267.4 C334.8,268.5 340.0,270.5 344.1,272.6 C348.2,274.7 351.1,277.3 354.2,279.9 C357.3,282.5 361.4,286.8 362.8,288.2 Z" fill="none" stroke="#b3ac8e" stroke-width="4.6" stroke-linejoin="round"/>
<path d="M270.2,320.4 C269.9,311.6 273.8,305.3 280.0,302.3 C288.0,298.8 298.7,298.8 305.4,302.3 C311.1,295.6 320.0,291.6 328.9,291.6 C339.6,292.0 348.4,298.2 350.2,311.6 C350.9,318.7 349.3,324.0 346.3,329.0 C350.6,330.8 350.6,336.4 346.3,338.2 C344.0,339.1 341.7,338.6 339.9,337.5 C332.4,343.6 323.6,348.0 314.7,349.8 C307.6,351.4 300.4,351.7 294.8,351.0 C292.6,354.2 287.3,354.2 285.2,351.0 C283.7,348.9 283.7,347.1 284.8,345.3 C276.4,339.1 270.6,330.2 270.2,320.4 Z" fill="none" stroke="#b3ac8e" stroke-width="4.6" stroke-linejoin="round"/>
<path d="M282.7,321.3 C282.3,316.0 286.6,311.6 293.3,310.8 C297.8,310.3 301.3,311.2 302.6,312.6 C302.6,316.9 301.3,321.3 299.6,324.9 L292.6,336.1 C286.6,332.0 283.0,327.2 282.7,321.3 Z" fill="none" stroke="#b3ac8e" stroke-width="4.6" stroke-linejoin="round"/>
<path d="M315.0,307.6 C318.2,303.6 324.4,301.8 329.8,302.7 C336.0,304.1 338.8,309.8 338.5,316.0 C338.3,319.0 337.8,321.3 336.9,323.6 L319.5,316.2 C317.9,313.3 317.3,311.6 315.0,307.6 Z" fill="none" stroke="#b3ac8e" stroke-width="4.6" stroke-linejoin="round"/>
<path d="M310.8,324.9 L328.9,332.4 C323.6,336.8 316.4,340.0 310.2,340.9 C305.8,341.8 302.2,341.4 299.6,340.4 Z" fill="none" stroke="#b3ac8e" stroke-width="4.6" stroke-linejoin="round"/>
<path d="M414.7,289.2 L427.5,314.8 L418.2,312.7 L431.0,339.7 L420.9,337.6 L435.1,367.4 L365.8,353.2 L390.1,331.3 L380.0,328.7 L401.7,310.2 L393.3,307.9Z" fill="none" stroke="#b3ac8e" stroke-width="4.6" stroke-linejoin="miter"/>
<path d="M392.8,360.7 L403.1,363.2 L399.6,379.3 L389.4,376.7Z" fill="none" stroke="#b3ac8e" stroke-width="4.6"/>
<ellipse cx="410.6" cy="307.9" rx="3.4" ry="4.7" transform="rotate(14 410.6 307.9)" fill="none" stroke="#b3ac8e" stroke-width="4.6"/>
<ellipse cx="401.3" cy="322.8" rx="3.4" ry="4.7" transform="rotate(14 401.3 322.8)" fill="none" stroke="#b3ac8e" stroke-width="4.6"/>
<ellipse cx="411.6" cy="334.4" rx="3.4" ry="4.7" transform="rotate(14 411.6 334.4)" fill="none" stroke="#b3ac8e" stroke-width="4.6"/>
<ellipse cx="390.3" cy="344.3" rx="3.4" ry="4.7" transform="rotate(14 390.3 344.3)" fill="none" stroke="#b3ac8e" stroke-width="4.6"/>
<ellipse cx="417.3" cy="353.9" rx="3.4" ry="4.7" transform="rotate(14 417.3 353.9)" fill="none" stroke="#b3ac8e" stroke-width="4.6"/>
<path d="M336.4,377.9 C345.8,373.1 358.2,370.4 371.7,369.9 L371.7,415.4 C371.0,420.8 366.2,423.6 360.9,423.6 C354.7,423.6 350.6,420.2 350.6,415.8 C350.6,410.4 355.6,406.9 361.8,406.9 C363.9,406.9 365.7,407.2 367.1,408.0 L367.1,386.8 C358.2,387.7 349.3,389.5 341.3,392.3 L341.3,421.5 C340.4,426.8 335.5,429.6 329.8,429.6 C323.9,429.6 319.8,426.4 319.8,422.0 C319.8,416.7 325.2,413.3 331.2,413.3 C333.3,413.3 335.1,413.6 336.4,414.4 Z" fill="none" stroke="#b3ac8e" stroke-width="4.6" stroke-linejoin="round"/>
<text y="254.3" font-family="Liberation Sans,sans-serif" font-size="72" fill="none" stroke="#b3ac8e" stroke-width="5.0" stroke-linejoin="round"><tspan x="306.72" textLength="29.33" lengthAdjust="spacingAndGlyphs">L</tspan><tspan x="338.8" textLength="24.9" lengthAdjust="spacingAndGlyphs">a</tspan><tspan x="368.48" textLength="19.18" lengthAdjust="spacingAndGlyphs">r</tspan><tspan x="391.39" textLength="25.06" lengthAdjust="spacingAndGlyphs">a</tspan></text>
<text y="515" font-family="Liberation Sans,sans-serif" font-size="72" fill="none" stroke="#b3ac8e" stroke-width="5.0" stroke-linejoin="round"><tspan x="287.92" textLength="32.94" lengthAdjust="spacingAndGlyphs">G</tspan><tspan x="324.09" textLength="28.92" lengthAdjust="spacingAndGlyphs">e</tspan><tspan x="356.67" textLength="26.13" lengthAdjust="spacingAndGlyphs">y</tspan><tspan x="387.09" textLength="28.92" lengthAdjust="spacingAndGlyphs">e</tspan><tspan x="417.37" textLength="17.18" lengthAdjust="spacingAndGlyphs">r</tspan></text><path d="M362.8,288.2 C364.2,286.8 368.3,282.5 371.4,279.9 C374.5,277.3 377.4,274.7 381.5,272.6 C385.6,270.5 390.8,268.5 395.9,267.4 C401.0,266.2 406.8,265.5 412.2,265.7 C417.7,265.9 423.1,266.6 428.6,268.4 C434.0,270.2 439.8,273.1 444.9,276.7 C450.1,280.3 455.2,285.0 459.3,290.2 C463.4,295.4 467.1,302.4 469.5,307.7 C471.9,313.0 472.9,317.9 473.7,322.3 C474.5,326.6 474.3,330.0 474.4,334.0 C474.4,392.3 393.1,462.0 362.8,470.5 C332.5,462.0 251.2,392.3 251.2,334.0 C251.3,330.0 251.1,326.6 251.9,322.3 C252.7,317.9 253.7,313.0 256.1,307.7 C258.5,302.4 262.2,295.4 266.3,290.2 C270.4,285.0 275.5,280.3 280.7,276.7 C285.8,273.1 291.6,270.2 297.0,268.4 C302.5,266.6 307.9,265.9 313.4,265.7 C318.8,265.5 324.6,266.2 329.7,267.4 C334.8,268.5 340.0,270.5 344.1,272.6 C348.2,274.7 351.1,277.3 354.2,279.9 C357.3,282.5 361.4,286.8 362.8,288.2 Z" fill="none" stroke="#6a644b" stroke-width="2.1" stroke-linejoin="round"/>
<path d="M270.2,320.4 C269.9,311.6 273.8,305.3 280.0,302.3 C288.0,298.8 298.7,298.8 305.4,302.3 C311.1,295.6 320.0,291.6 328.9,291.6 C339.6,292.0 348.4,298.2 350.2,311.6 C350.9,318.7 349.3,324.0 346.3,329.0 C350.6,330.8 350.6,336.4 346.3,338.2 C344.0,339.1 341.7,338.6 339.9,337.5 C332.4,343.6 323.6,348.0 314.7,349.8 C307.6,351.4 300.4,351.7 294.8,351.0 C292.6,354.2 287.3,354.2 285.2,351.0 C283.7,348.9 283.7,347.1 284.8,345.3 C276.4,339.1 270.6,330.2 270.2,320.4 Z" fill="none" stroke="#6a644b" stroke-width="2.1" stroke-linejoin="round"/>
<path d="M282.7,321.3 C282.3,316.0 286.6,311.6 293.3,310.8 C297.8,310.3 301.3,311.2 302.6,312.6 C302.6,316.9 301.3,321.3 299.6,324.9 L292.6,336.1 C286.6,332.0 283.0,327.2 282.7,321.3 Z" fill="none" stroke="#6a644b" stroke-width="2.1" stroke-linejoin="round"/>
<path d="M315.0,307.6 C318.2,303.6 324.4,301.8 329.8,302.7 C336.0,304.1 338.8,309.8 338.5,316.0 C338.3,319.0 337.8,321.3 336.9,323.6 L319.5,316.2 C317.9,313.3 317.3,311.6 315.0,307.6 Z" fill="none" stroke="#6a644b" stroke-width="2.1" stroke-linejoin="round"/>
<path d="M310.8,324.9 L328.9,332.4 C323.6,336.8 316.4,340.0 310.2,340.9 C305.8,341.8 302.2,341.4 299.6,340.4 Z" fill="none" stroke="#6a644b" stroke-width="2.1" stroke-linejoin="round"/>
<path d="M414.7,289.2 L427.5,314.8 L418.2,312.7 L431.0,339.7 L420.9,337.6 L435.1,367.4 L365.8,353.2 L390.1,331.3 L380.0,328.7 L401.7,310.2 L393.3,307.9Z" fill="none" stroke="#6a644b" stroke-width="2.1" stroke-linejoin="miter"/>
<path d="M392.8,360.7 L403.1,363.2 L399.6,379.3 L389.4,376.7Z" fill="none" stroke="#6a644b" stroke-width="2.1"/>
<ellipse cx="410.6" cy="307.9" rx="3.4" ry="4.7" transform="rotate(14 410.6 307.9)" fill="none" stroke="#6a644b" stroke-width="2.1"/>
<ellipse cx="401.3" cy="322.8" rx="3.4" ry="4.7" transform="rotate(14 401.3 322.8)" fill="none" stroke="#6a644b" stroke-width="2.1"/>
<ellipse cx="411.6" cy="334.4" rx="3.4" ry="4.7" transform="rotate(14 411.6 334.4)" fill="none" stroke="#6a644b" stroke-width="2.1"/>
<ellipse cx="390.3" cy="344.3" rx="3.4" ry="4.7" transform="rotate(14 390.3 344.3)" fill="none" stroke="#6a644b" stroke-width="2.1"/>
<ellipse cx="417.3" cy="353.9" rx="3.4" ry="4.7" transform="rotate(14 417.3 353.9)" fill="none" stroke="#6a644b" stroke-width="2.1"/>
<path d="M336.4,377.9 C345.8,373.1 358.2,370.4 371.7,369.9 L371.7,415.4 C371.0,420.8 366.2,423.6 360.9,423.6 C354.7,423.6 350.6,420.2 350.6,415.8 C350.6,410.4 355.6,406.9 361.8,406.9 C363.9,406.9 365.7,407.2 367.1,408.0 L367.1,386.8 C358.2,387.7 349.3,389.5 341.3,392.3 L341.3,421.5 C340.4,426.8 335.5,429.6 329.8,429.6 C323.9,429.6 319.8,426.4 319.8,422.0 C319.8,416.7 325.2,413.3 331.2,413.3 C333.3,413.3 335.1,413.6 336.4,414.4 Z" fill="none" stroke="#6a644b" stroke-width="2.1" stroke-linejoin="round"/>
<text y="254.3" font-family="Liberation Sans,sans-serif" font-size="72" fill="none" stroke="#6a644b" stroke-width="2.6" stroke-linejoin="round"><tspan x="306.72" textLength="29.33" lengthAdjust="spacingAndGlyphs">L</tspan><tspan x="338.8" textLength="24.9" lengthAdjust="spacingAndGlyphs">a</tspan><tspan x="368.48" textLength="19.18" lengthAdjust="spacingAndGlyphs">r</tspan><tspan x="391.39" textLength="25.06" lengthAdjust="spacingAndGlyphs">a</tspan></text>
<text y="515" font-family="Liberation Sans,sans-serif" font-size="72" fill="none" stroke="#6a644b" stroke-width="2.6" stroke-linejoin="round"><tspan x="287.92" textLength="32.94" lengthAdjust="spacingAndGlyphs">G</tspan><tspan x="324.09" textLength="28.92" lengthAdjust="spacingAndGlyphs">e</tspan><tspan x="356.67" textLength="26.13" lengthAdjust="spacingAndGlyphs">y</tspan><tspan x="387.09" textLength="28.92" lengthAdjust="spacingAndGlyphs">e</tspan><tspan x="417.37" textLength="17.18" lengthAdjust="spacingAndGlyphs">r</tspan></text></svg></div>
<div class="abs" style="left:844.5px;top:137.5px;width:356px;height:39px;background:#fff;border:1px solid #cfcfcf;border-top:none"></div>
<div class="abs" style="left:977.8px;top:138px;width:1px;height:38px;background:#d4d4d4;"></div>
<div class="abs" style="left:1066.3px;top:138px;width:1px;height:38px;background:#d4d4d4;"></div>
<div class="abs" style="left:1096.9px;top:138px;width:1px;height:38px;background:#d4d4d4;"></div>
<div class="abs" style="left:854px;top:144px;width:26px;height:27px;background:#cdc6a6;background:linear-gradient(160deg,#d2cbab,#c6bf9f)"></div>
<span class="t" style="left:893.00px;top:141.30px;height:14px;line-height:14px;font-size:11px;color:#8a8a8a;transform:scaleX(0.9613);transform-origin:0 50%;">Birch Plywood</span>
<span class="t" style="left:884.50px;top:155.80px;height:20px;line-height:20px;font-size:15px;color:#8c8c8c;transform:scaleX(0.8810);transform-origin:0 50%;">6 × 8 × 0.75 in</span>
<span class="t" style="left:1016.00px;top:141.30px;height:14px;line-height:14px;font-size:11px;color:#8a8a8a;transform:scaleX(1.0127);transform-origin:0 50%;">Bit</span>
<span class="t" style="left:1001.00px;top:155.80px;height:20px;line-height:20px;font-size:15px;color:#5e5e5e;transform:scaleX(0.9770);transform-origin:0 50%;">1/16 in</span>
<svg style="left:1075px;top:151px" width="14" height="14" viewBox="-7 -7 14 14"><path d="M-5.4,0H5.4M0,-5.4V5.4" stroke="#666" stroke-width="1.2"/></svg>
<span class="t" style="left:1115.50px;top:148.30px;height:18px;line-height:18px;font-size:13.5px;color:#555;transform:scaleX(0.8975);transform-origin:0 50%;">Cut Settings</span>
<svg style="left:1029px;top:582px" width="13" height="12" viewBox="0 0 13 12"><path d="M1.6,6.2L4.8,9.4L11.2,2.6" stroke="#7d7d7d" stroke-width="2.2" fill="none"/></svg>
<span class="t" style="left:1047.00px;top:579.50px;height:17px;line-height:17px;font-size:13px;color:#8a8a8a;transform:scaleX(0.9435);transform-origin:0 50%;">Detailed</span>
<div class="abs" style="left:1099px;top:573px;width:68px;height:32px;background:#f4f4f4;box-shadow:0 1px 1.5px rgba(0,0,0,.22)"></div>
<span class="t" style="left:1110.00px;top:580.80px;height:17px;line-height:17px;font-size:13px;color:#3a3a3a;transform:scaleX(0.9194);transform-origin:0 50%;">Simulate</span>
<div class="abs" style="left:1172px;top:573px;width:23.5px;height:32px;background:#f4f4f4;box-shadow:0 1px 1.5px rgba(0,0,0,.22)"></div>
<div class="abs" style="left:1182.4px;top:583.4px;width:2.6px;height:2.6px;background:#222;border-radius:50%"></div>
<div class="abs" style="left:1182.4px;top:588px;width:2.6px;height:2.6px;background:#222;border-radius:50%"></div>
<div class="abs" style="left:1182.4px;top:592.6px;width:2.6px;height:2.6px;background:#222;border-radius:50%"></div>
<div class="abs" style="left:0px;top:632.5px;width:1200px;height:42.5px;background:#cee5d5;"></div>
<div class="abs" style="left:5px;top:638px;width:32px;height:32px;background:#c4dacb;border-radius:50%"></div>
<div class="abs" style="left:14.6px;top:647.4px;width:12.8px;height:12.8px;background:transparent;border-radius:50%;border:2.1px solid #111"></div>
<svg style="left:561px;top:638.5px" width="30" height="30" viewBox="-15 -15 30 30"><path d="M-6.24,3.60L-12.47,-7.20A14.4,14.4 0 0 1 12.47,-7.20L0.00,-7.20L0,0Z" fill="#e8433a"/><path d="M0.00,-7.20L12.47,-7.20A14.4,14.4 0 0 1 0.00,14.40L6.24,3.60L0,0Z" fill="#fbc116"/><path d="M6.24,3.60L0.00,14.40A14.4,14.4 0 0 1 -12.47,-7.20L-6.24,3.60L0,0Z" fill="#31a350"/><circle r="7.2" fill="#fff"/><circle r="5.6" fill="#1f6fe0"/></svg>
<div class="abs" style="left:572px;top:670.8px;width:9px;height:1.7px;background:#111;border-radius:1px"></div>
<svg style="left:610.5px;top:638.5px" width="30" height="30" viewBox="-15 -15 30 30"><circle r="14.7" fill="#1a73e8"/><path d="M-4.2,-7L-3.4,-9.4H3.6L4.4,-7Z" fill="#a8c7fa"/><rect x="-9.5" y="-7" width="19" height="14.5" rx="0.8" fill="#fff"/><circle cy="0.4" r="6.3" fill="#9dc0f8"/><circle cy="0.4" r="4.6" fill="#1a73e8"/><circle cx="7.4" cy="-4.8" r="0.7" fill="#9dc0f8"/></svg>
<div class="abs" style="left:903.8px;top:640.4px;width:26.4px;height:26.4px;background:#fcfcfc;border-radius:50%;box-shadow:0 0 1.5px rgba(0,0,0,.3)"></div>
<div class="abs" style="left:911px;top:646.5px;width:8px;height:1px;background:#e3e3e3;"></div>
<div class="abs" style="left:911px;top:649px;width:11px;height:1px;background:#e6e6e6;"></div>
<div class="abs" style="left:912px;top:651.5px;width:11px;height:5px;background:#ececee;"></div>
<div class="abs" style="left:911px;top:659px;width:7px;height:1px;background:#e9e9e9;"></div>
<div class="abs" style="left:886.3px;top:640.4px;width:26.4px;height:26.4px;background:#fcfcfc;border-radius:50%;box-shadow:0 0 1.5px rgba(0,0,0,.3)"></div>
<div class="abs" style="left:893.5px;top:646.5px;width:8px;height:1px;background:#e3e3e3;"></div>
<div class="abs" style="left:893.5px;top:649px;width:11px;height:1px;background:#e6e6e6;"></div>
<div class="abs" style="left:894.5px;top:651.5px;width:11px;height:5px;background:#ececee;"></div>
<div class="abs" style="left:893.5px;top:659px;width:7px;height:1px;background:#e9e9e9;"></div>
<div class="abs" style="left:940px;top:640px;width:73px;height:28px;background:#db3026;border-radius:3px"></div>
<span class="t" style="left:954.00px;top:645.70px;height:17px;line-height:17px;font-size:13px;color:#fff;transform:scaleX(0.9329);transform-origin:0 50%;">Sign out</span>
<div class="abs" style="left:1022px;top:638.5px;width:58px;height:32px;background:#c2dbca;border-radius:16px 6px 6px 16px"></div>
<span class="t" style="left:1034.00px;top:645.70px;height:17px;line-height:17px;font-size:13px;color:#111;transform:scaleX(0.9270);transform-origin:0 50%;-webkit-text-stroke:0.3px #111;">Oct 26</span>
<div class="abs" style="left:1083px;top:638.5px;width:111px;height:32px;background:#c2dbca;border-radius:6px 16px 16px 6px"></div>
<span class="t" style="left:1095.00px;top:645.70px;height:17px;line-height:17px;font-size:13px;color:#111;transform:scaleX(0.9222);transform-origin:0 50%;-webkit-text-stroke:0.3px #111;">10:01</span>
<div class="abs" style="left:1132.4px;top:647.4px;width:13.2px;height:13.2px;background:#111;border-radius:50%"></div>
<span class="t" style="left:1136.30px;top:648.20px;height:12px;line-height:12px;font-size:9.5px;color:#fff;font-weight:700;">5</span>
<svg style="left:1153px;top:647px" width="16" height="14" viewBox="0 0 16 14"><path d="M8,12.6L0.6,4.2A11,11 0 0 1 15.4,4.2Z" fill="#111"/></svg>
<svg style="left:1174px;top:645px" width="10" height="17" viewBox="0 0 10 17"><path d="M3.2,0.8H6.8V2.4H8.8V16H1.2V2.4H3.2Z" fill="#111"/></svg>
</div>
</body></html>
